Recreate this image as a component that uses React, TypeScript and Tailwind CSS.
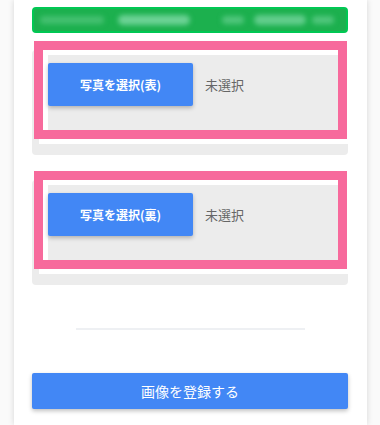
import React from "react";

const font = { fontFamily: '"Noto Sans CJK JP", "Noto Sans", sans-serif' };

function UploadBlock({ label, mt }: { label: string; mt: string }) {
  return (
    <div className={`${mt} h-[105px] rounded-[4px] bg-[#ececec]`}>
      <div className="ml-[7px] mr-[-1px] h-[94px] bg-white pl-[4px]">
        <div className="h-[80px] w-[295px] bg-white pl-[5px] pt-[5px] outline outline-[9px] outline-[#f76a9c]">
          <div className="h-full bg-[#ececec] pt-[8px]">
            <div className="flex items-center">
              <button className="h-[43px] w-[145px] rounded-[2px] bg-[#4287f5] text-[12px] font-bold text-white shadow-[0_2px_4px_rgba(0,0,0,0.25)]">
                {label}
              </button>
              <span className="ml-[12px] text-[13px] text-[#666]">未選択</span>
            </div>
          </div>
        </div>
      </div>
    </div>
  );
}

export default function App() {
  return (
    <div className="h-[425px] w-[380px] overflow-hidden bg-[#fafafa]" style={font}>
      <div className="ml-[14px] h-[425px] w-[353px] bg-white px-[18px] pr-[19px] shadow-[0_0_6px_rgba(0,0,0,0.15)]">
        <div className="pt-[7px]">
          <div className="relative h-[26px] overflow-hidden rounded-[4px] border-[2px] border-[#00c853] bg-[#1cb04e]">
            <div className="absolute inset-0 flex items-center blur-[2.5px]">
              <div className="ml-[6px] h-[8px] w-[64px] rounded-full bg-[#44c070]" />
              <div className="ml-[14px] h-[10px] w-[72px] rounded-full bg-[#6cd295]" />
              <div className="ml-[32px] h-[8px] w-[22px] rounded-full bg-[#50c67c]" />
              <div className="ml-[10px] h-[10px] w-[52px] rounded-full bg-[#62cd8c]" />
              <div className="ml-[6px] h-[8px] w-[22px] rounded-full bg-[#50c67c]" />
            </div>
          </div>
        </div>
        <UploadBlock label="写真を選択(表)" mt="mt-[17px]" />
        <UploadBlock label="写真を選択(裏)" mt="mt-[25px]" />
        <div className="ml-[44px] mt-[43px] h-[2px] w-[229px] bg-[#eef0f3]" />
        <button className="mt-[43px] h-[36px] w-full rounded-[2px] bg-[#4287f5] text-[14px] text-white shadow-[0_2px_4px_rgba(0,0,0,0.25)]">
          画像を登録する
        </button>
      </div>
    </div>
  );
}
